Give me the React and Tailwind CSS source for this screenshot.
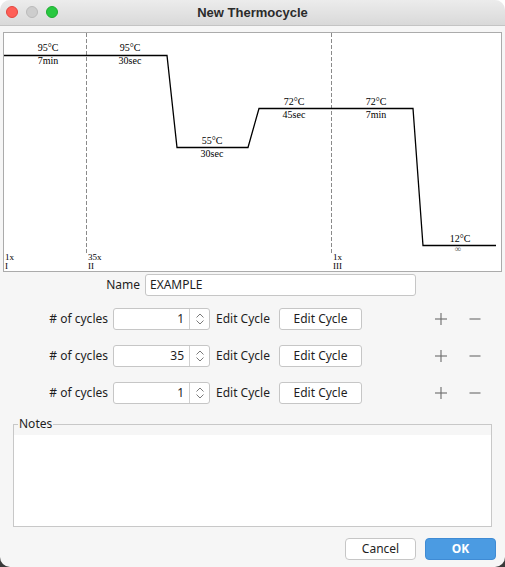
import React from 'react';

const SERIF = { fontFamily: '"Liberation Serif", "Times New Roman", serif' };

function Chart() {
  const labels = [
    { x: 48, t: '95°C', b: '7min', y: 50 },
    { x: 130, t: '95°C', b: '30sec', y: 50 },
    { x: 212, t: '55°C', b: '30sec', y: 143 },
    { x: 294, t: '72°C', b: '45sec', y: 104 },
    { x: 376, t: '72°C', b: '7min', y: 104 },
  ];
  const stages = [
    { x: 5, n: '1x', r: 'I' },
    { x: 88, n: '35x', r: 'II' },
    { x: 333, n: '1x', r: 'III' },
  ];
  return (
    <div className="mx-[3px] mt-[6px] h-[240px] border border-[#ababab] bg-white">
      <svg width="495" height="238" viewBox="4 32 495 238" style={SERIF} fontSize="10">
        <line x1="86.5" y1="32" x2="86.5" y2="252" stroke="#8a8a8a" strokeDasharray="4 2" />
        <line x1="331.5" y1="32" x2="331.5" y2="252" stroke="#8a8a8a" strokeDasharray="4 2" />
        <polyline
          points="4,54.5 167,54.5 177,146.5 248,146.5 259,107.5 413,107.5 423,244.5 496,244.5"
          fill="none"
          stroke="#000"
          strokeWidth="1.3"
        />
        {labels.map((l, i) => (
          <g key={i} textAnchor="middle" fill="#000">
            <text x={l.x} y={l.y}>{l.t}</text>
            <text x={l.x} y={l.y + 13}>{l.b}</text>
          </g>
        ))}
        <text x="460" y="241" textAnchor="middle">12°C</text>
        <text x="458" y="251" textAnchor="middle" fontSize="9" fill="#555">∞</text>
        {stages.map((s, i) => (
          <g key={i} fontSize="9">
            <text x={s.x} y="259">{s.n}</text>
            <text x={s.x} y="268">{s.r}</text>
          </g>
        ))}
      </svg>
    </div>
  );
}

function Spinner({ value }) {
  return (
    <div className="flex h-[22px] w-[97px] rounded-[3px] border border-[#c6c6c6] bg-white">
      <div className="flex-1 pr-[5px] text-right leading-[20px]">{value}</div>
      <div className="flex w-[20px] items-center justify-center border-l border-[#d0d0d0]">
        <svg width="10" height="14" viewBox="0 0 10 14" fill="none" stroke="#7a7a7a" strokeWidth="1">
          <polyline points="1.5,5.5 5,2 8.5,5.5" />
          <polyline points="1.5,8.5 5,12 8.5,8.5" />
        </svg>
      </div>
    </div>
  );
}

function CycleRow({ value }) {
  return (
    <div className="flex h-[22px] items-center">
      <div className="w-[108px] text-right">{'# of cycles'}</div>
      <div className="ml-[5px]">
        <Spinner value={value} />
      </div>
      <div className="ml-[6px] w-[63px]">Edit Cycle</div>
      <button className="h-[22px] w-[83px] rounded-[3px] border border-[#c6c6c6] bg-white leading-[20px]">
        Edit Cycle
      </button>
      <div className="ml-[72px] flex items-center">
        <svg width="14" height="14" viewBox="0 0 14 14" stroke="#6b6b6b" strokeWidth="1.1">
          <line x1="7" y1="1" x2="7" y2="13" />
          <line x1="1" y1="7" x2="13" y2="7" />
        </svg>
        <svg className="ml-[21px]" width="12" height="14" viewBox="0 0 12 14" stroke="#6b6b6b" strokeWidth="1.1">
          <line x1="0.5" y1="7" x2="11.5" y2="7" />
        </svg>
      </div>
    </div>
  );
}

export default function App() {
  return (
    <div className="h-[567px] w-[505px] bg-[linear-gradient(to_bottom,#ffffff_50%,#3a3a3a_50%)]">
      <div
        className="flex h-[567px] w-[505px] flex-col overflow-hidden rounded-[10px] bg-[#f6f6f6] text-[12px] text-[#1e1e1e]"
        style={{ fontFamily: '"Noto Sans", "Open Sans", sans-serif' }}
      >
        {/* Title bar */}
        <div className="relative flex h-[26px] items-center justify-center border-b border-[#c4c4c4] bg-[linear-gradient(to_bottom,#ececec,#d9d9d9)]">
          <div className="absolute left-[6px] top-[6px] flex gap-[8px]">
            <span className="h-[12px] w-[12px] rounded-full bg-[#fe5f57] border border-[#e2463f]" />
            <span className="h-[12px] w-[12px] rounded-full bg-[#cdcdcd] border border-[#bababa]" />
            <span className="h-[12px] w-[12px] rounded-full bg-[#28c840] border border-[#1eab31]" />
          </div>
          <div
            className="text-[13px] font-bold text-[#2b2b2b]"
            style={{ fontFamily: '"Liberation Sans", Arial, sans-serif' }}
          >
            New Thermocycle
          </div>
        </div>

        <Chart />

        {/* Name */}
        <div className="mt-[2px] flex h-[22px] items-center">
          <div className="w-[140px] text-right">Name</div>
          <div className="ml-[5px] h-[22px] w-[271px] rounded-[3px] border border-[#c6c6c6] bg-white pl-[4px] leading-[20px]">
            EXAMPLE
          </div>
        </div>

        <div className="mt-[12px] flex flex-col gap-[15px]">
          <CycleRow value="1" />
          <CycleRow value="35" />
          <CycleRow value="1" />
        </div>

        {/* Notes */}
        <div className="relative mx-[13px] mt-[20px] h-[103px] border border-[#c8c8c8] pt-[10px]">
          <div className="absolute left-[4px] top-[-9px] bg-[#f6f6f6] px-[1px] text-[12px] leading-[16px]">Notes</div>
          <div className="h-full w-full bg-white" />
        </div>

        {/* Buttons */}
        <div className="mt-[11px] flex justify-end gap-[9px] pr-[9px]">
          <button className="h-[22px] w-[71px] rounded-[4px] border border-[#c6c6c6] bg-white leading-[20px]">
            Cancel
          </button>
          <button className="h-[22px] w-[71px] rounded-[4px] border border-[#3f8bd4] bg-[#4b9be2] font-bold leading-[20px] text-white">
            OK
          </button>
        </div>
      </div>
    </div>
  );
}
